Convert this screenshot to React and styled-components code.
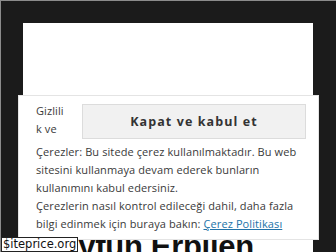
import React from "react";
import styled, { createGlobalStyle } from "styled-components";

const GlobalStyle = createGlobalStyle`
  html, body {
    margin: 0;
    padding: 0;
    background: #1b1b1b;
  }
  body {
    width: 336px;
    height: 252px;
    overflow: hidden;
    box-sizing: border-box;
    border-top: 1px solid #8c8c8c;
    border-left: 1px solid #8c8c8c;
  }
`;

const Frame = styled.div`
  position: relative;
  height: 251px;
  padding: 22px 23px 0 22px;
  box-sizing: border-box;
`;

const Content = styled.main`
  background: #fff;
  height: 100%;
  padding: 206px 0 0 22px;
  box-sizing: border-box;
  overflow: hidden;
`;

const Title = styled.h1`
  margin: 0;
  font-family: "Liberation Sans", Arial, sans-serif;
  font-weight: 700;
  font-size: 31px;
  line-height: 36px;
  color: #111;
  letter-spacing: -0.3px;
`;

const Banner = styled.div`
  position: absolute;
  left: 17px;
  top: 94px;
  width: 301px;
  box-sizing: border-box;
  background: #fff;
  border: 1px solid #e4e4e4;
  padding: 6px 12px 6px 17px;
  font-family: "Open Sans", "Noto Sans", sans-serif;
  font-size: 11px;
  letter-spacing: 0.1px;
  line-height: 18px;
  color: #3a3a3a;
`;

const Form = styled.form`
  float: right;
  margin: 2px 0 4px 8px;
`;

const Button = styled.button`
  width: 224px;
  height: 35px;
  background: #f1f1f1;
  border: 1px solid #dcdcdc;
  border-radius: 0;
  font-family: "Open Sans", "Noto Sans", sans-serif;
  font-size: 12.5px;
  font-weight: 700;
  letter-spacing: 1.1px;
  color: #333;
  cursor: pointer;
`;

const Link = styled.a`
  color: #2273a8;
  text-decoration: underline;
`;

const Watermark = styled.div`
  position: absolute;
  left: 0;
  bottom: 0;
  background: #fff;
  border: 1px solid #222;
  padding: 0 1px;
  font-family: "DejaVu Sans", sans-serif;
  font-size: 11.5px;
  line-height: 13px;
  color: #111;
`;

export default function App() {
  return (
    <>
      <GlobalStyle />
      <Frame>
        <Content>
          <Title>Tayfun Erpilen</Title>
        </Content>
        <Banner>
          <Form onSubmit={(e) => e.preventDefault()}>
            <Button type="submit">Kapat ve kabul et</Button>
          </Form>
          Gizlili<br />k ve Çerezler: Bu sitede çerez kullanılmaktadır. Bu web sitesini
          kullanmaya devam ederek bunların kullanımını kabul edersiniz.
          <br />
          Çerezlerin nasıl kontrol edileceği dahil, daha fazla bilgi edinmek için buraya
          bakın: <Link href="#">Çerez Politikası</Link>
        </Banner>
        <Watermark>$iteprice.org</Watermark>
      </Frame>
    </>
  );
}
